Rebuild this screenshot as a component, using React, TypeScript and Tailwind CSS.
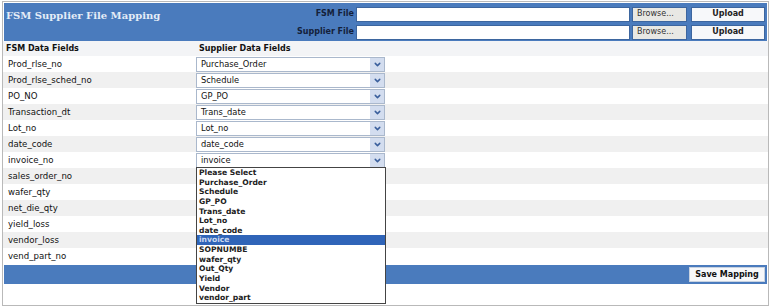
import { ChevronDown } from "lucide-react";

const fields = [
  "Prod_rlse_no",
  "Prod_rlse_sched_no",
  "PO_NO",
  "Transaction_dt",
  "Lot_no",
  "date_code",
  "invoice_no",
  "sales_order_no",
  "wafer_qty",
  "net_die_qty",
  "yield_loss",
  "vendor_loss",
  "vend_part_no",
];

const mapped: Record<string, string> = {
  Prod_rlse_no: "Purchase_Order",
  Prod_rlse_sched_no: "Schedule",
  PO_NO: "GP_PO",
  Transaction_dt: "Trans_date",
  Lot_no: "Lot_no",
  date_code: "date_code",
  invoice_no: "invoice",
};

const options = [
  "Please Select",
  "Purchase_Order",
  "Schedule",
  "GP_PO",
  "Trans_date",
  "Lot_no",
  "date_code",
  "invoice",
  "SOPNUMBE",
  "wafer_qty",
  "Out_Qty",
  "Yield",
  "Vendor",
  "vendor_part",
];

function FileRow({ label }: { label: string }) {
  return (
    <div className="flex items-center h-[18px] gap-[2px]">
      <span className="w-[62px] text-right font-bold text-[8px] text-[#14213a]">{label}</span>
      <div className="w-[274px] h-[15px] bg-white border border-[#3d669f]" />
      <button className="w-[55px] h-[15px] bg-[#e8e8e4] border border-[#3d669f] text-[8px] text-[#333] text-left pl-[4px]">
        Browse...
      </button>
      <button className="w-[74px] h-[15px] bg-[#f7f8fa] border border-[#3d669f] text-[8px] font-bold text-[#222] ml-[2px]">
        Upload
      </button>
    </div>
  );
}

function FakeSelect({ value }: { value: string }) {
  return (
    <div className="w-[189px] h-[15px] bg-white border border-[#aab8cc] flex items-center">
      <span className="flex-1 pl-[4px] text-[8.3px] text-[#111]">{value}</span>
      <div className="w-[14px] h-full bg-[#d3ddef] flex items-center justify-center">
        <ChevronDown className="w-[9px] h-[9px] text-[#3a5f9c]" strokeWidth={4} />
      </div>
    </div>
  );
}

export default function App() {
  return (
    <div className="w-[774px] h-[307px] bg-white pl-[2px] pt-[1px] pr-[5px] pb-[1px] font-['DejaVu_Sans',sans-serif]">
      <div className="h-full border border-[#b9b9b9] flex flex-col bg-white">
        {/* Header */}
        <div className="h-[38px] bg-[#4a7bbd] flex justify-between mx-[1px] mt-[1px]">
          <h1 className="pl-[2px] pt-[5px] text-[10px] font-bold text-[#e4ecf7] font-['DejaVu_Serif',serif]">
            FSM Supplier File Mapping
          </h1>
          <div className="flex flex-col pt-[2px] pr-[2px]">
            <FileRow label="FSM File" />
            <FileRow label="Supplier File" />
          </div>
        </div>

        {/* Column headers */}
        <div className="flex h-[15px] items-center bg-[#f3f4f6] text-[8px] font-bold text-[#111]">
          <span className="w-[193px] pl-[3px]">FSM Data Fields</span>
          <span className="pl-[3px]">Supplier Data Fields</span>
        </div>

        {/* Rows */}
        <div className="relative">
          {fields.map((f, i) => (
            <div key={f} className={`flex h-[16px] items-center ${i % 2 === 1 ? "bg-[#f0f0f0]" : "bg-white"}`}>
              <span className="w-[193px] pl-[5px] text-[8.6px] text-[#111]">{f}</span>
              {mapped[f] && <FakeSelect value={mapped[f]} />}
            </div>
          ))}

          {/* Open dropdown list */}
          <div className="absolute left-[193px] top-[111px] w-[190px] h-[137px] bg-white border border-[#444] z-10">
            {options.map((o) => (
              <div
                key={o}
                className={`h-[9.65px] leading-[9.65px] pl-[2px] text-[7.6px] font-bold ${
                  o === "invoice" ? "bg-[#2f64b8] text-[#c9d8f0]" : "text-[#222]"
                }`}
              >
                {o}
              </div>
            ))}
          </div>
        </div>

        {/* Footer */}
        <div className="h-[19px] mt-[1px] bg-[#4a7bbd] flex items-center justify-end pr-[2px] mx-[1px]">
          <button className="w-[76px] h-[15px] bg-[#f7f8fa] border border-[#c8d2e0] text-[8px] font-bold text-[#111]">
            Save Mapping
          </button>
        </div>
        <div className="flex-1" />
      </div>
    </div>
  );
}
